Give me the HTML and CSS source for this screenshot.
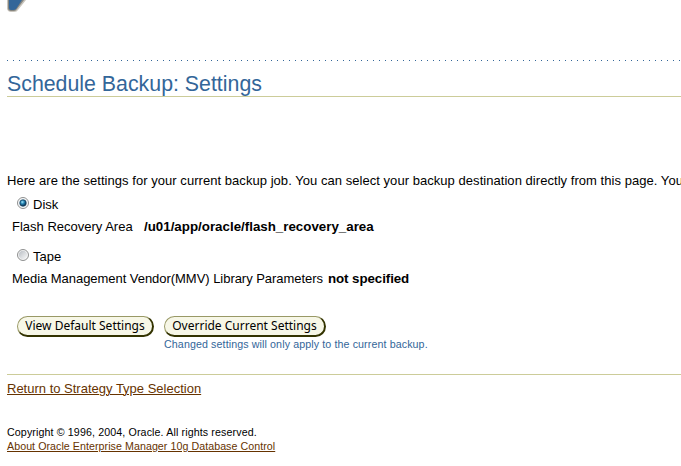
FILE: index.html
```html
<!DOCTYPE html>
<html lang="en">
<head>
<meta charset="utf-8">
<title>Schedule Backup: Settings</title>
<link rel="stylesheet" href="styles.css">
</head>
<body>
<header class="brand">
<svg class="logo" width="24" height="13" viewBox="0 0 24 13"><path d="M0 0H19L11 10Q10 12 7 12H4Q1 12 0 9Z" fill="#c9c5bd"/><path d="M1 0H17L10 9Q9 11 7 11H4Q1 11 1 8Z" fill="#85857f"/><path d="M2 0H15L9 9Q8 10 6 10H4Q2 10 2 8Z" fill="#336699"/></svg>
</header>
<div class="dots"></div>
<h1>Schedule Backup: Settings</h1>
<main>
<p class="intro">Here are the settings for your current backup job. You can select your backup destination directly from this page. You</p>
<label class="option"><svg class="radio" width="13" height="13" viewBox="0 0 13 13"><defs><radialGradient id="dot" cx=".4" cy=".35" r=".65"><stop offset="0" stop-color="#a5e5fa"/><stop offset=".45" stop-color="#2686b4"/><stop offset="1" stop-color="#092c4b"/></radialGradient></defs><circle cx="6" cy="6" r="5.5" fill="#fff" stroke="#8e8f8f"/><circle cx="6" cy="6" r="4.3" fill="#d7e0e5"/><circle cx="6" cy="6" r="3.2" fill="url(#dot)" stroke="#163e5b" stroke-width=".7"/></svg><span>Disk</span></label>
<div class="detail"><span class="fra">Flash Recovery Area</span><b>/u01/app/oracle/flash_recovery_area</b></div>
<label class="option second"><svg class="radio" width="13" height="13" viewBox="0 0 13 13"><defs><linearGradient id="empty" x2="1" y2="1"><stop stop-color="#b8bdc3"/><stop offset="1" stop-color="#fafafa"/></linearGradient></defs><circle cx="6" cy="6" r="5.5" fill="#f5f5f5" stroke="#8e8f8f"/><circle cx="6" cy="6" r="4.2" fill="url(#empty)"/></svg><span>Tape</span></label>
<div class="detail"><span class="mmv">Media Management Vendor(MMV) Library Parameters</span><b class="none">not specified</b></div>
<div class="actions">
<button class="view">View Default Settings</button>
<div><button class="override">Override Current Settings</button><p class="hint">Changed settings will only apply to the current backup.</p></div>
</div>
</main>
<footer>
<a class="return" href="#">Return to Strategy Type Selection</a>
<p class="copy">Copyright © 1996, 2004, Oracle. All rights reserved.</p>
<a class="about" href="#">About Oracle Enterprise Manager 10g Database Control</a>
</footer>
</body>
</html>
```
FILE: styles.css
```css
* { box-sizing: border-box; }
body { margin: 0; padding-left: 7px; height: 466px; overflow: hidden; background: #fff; color: #000; font: 13px/16px "Liberation Sans", Arial, sans-serif; white-space: nowrap; }
p { margin: 0; }
.brand { height: 60px; }
.logo { display: block; }
.dots { height: 1px; background: repeating-linear-gradient(to right, #336699 0 1px, transparent 1px 6px); }
h1 { margin: 0; padding-top: 11px; height: 36px; border-bottom: 1px solid #cccc99; color: #336699; font-size: 21.33px; line-height: 24px; font-weight: normal; }
main { padding-top: 76px; height: 277px; }
.intro { height: 22px; overflow: hidden; letter-spacing: .045px; }
.option { display: flex; height: 23px; padding-left: 10px; }
.radio { margin: 2px 3px 0 0; }
.option span { margin-top: 2px; }
.second { margin-top: 6px; }
.detail { display: flex; height: 23px; padding: 1px 0 0 5px; }
.detail b { font-size: 13.33px; }
.detail .none { letter-spacing: -.08px; }
.fra { width: 132px; }
.mmv { width: 316px; letter-spacing: -.04px; }
.actions { display: flex; gap: 10px; padding: 23px 0 0 10px; }
button { display: block; height: 21px; padding: 0; border: solid; border-width: 1px 2px 2px 1px; border-color: #999966 #333300 #333300 #999966; border-radius: 11px; background: #f7f7e7; color: #000; font: 12px/18px "Noto Sans", sans-serif; text-align: center; }
.view { width: 137px; }
.override { width: 162px; }
.hint { color: #336699; font-size: 10.67px; line-height: 14px; letter-spacing: .11px; }
footer { height: 92px; border-top: 1px solid #cccc99; padding-top: 6px; }
a { color: #663300; display: table; text-underline-offset: 1px; text-decoration-thickness: 1px; }
.copy { margin-top: 28px; font-size: 10.67px; line-height: 14px; letter-spacing: .12px; }
.about { font-size: 10.67px; line-height: 14px; letter-spacing: .055px; }
```
